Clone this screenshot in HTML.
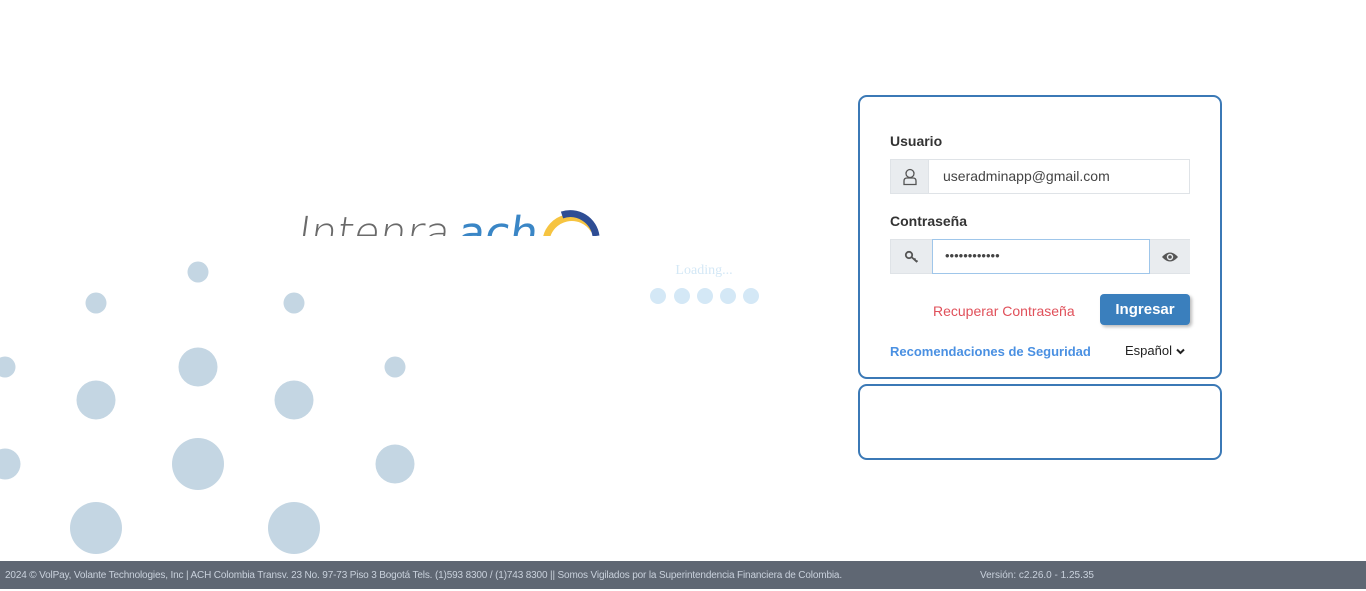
<!DOCTYPE html>
<html><head><meta charset="utf-8"><style>
*{box-sizing:border-box;margin:0;padding:0}
body{width:1366px;height:589px;overflow:hidden;background:#fff;font-family:"Liberation Sans",Arial,sans-serif;position:relative}
.card{position:absolute;left:858px;width:364px;border:2px solid #3b79b6;border-radius:9px;background:#fff}
.lbl{position:absolute;left:30px;font-size:14px;font-weight:bold;color:#333}
.grp{position:absolute;left:30px;width:300px;height:35px;border:1px solid #dfe3e7}
.add{position:absolute;top:0;height:33px;background:#e9ecef;display:flex;align-items:center;justify-content:center}
.foot{position:absolute;left:0;top:561px;width:1366px;height:28px;background:#5f6773;color:#c9d1dc;font-size:10px;line-height:30px}
</style></head><body>
<svg width="1366" height="589" style="position:absolute;left:0;top:0">
<g fill="#c4d6e3">
<circle cx="198" cy="272" r="10.5"/><circle cx="96" cy="303" r="10.5"/><circle cx="294" cy="303" r="10.5"/>
<circle cx="5" cy="367" r="10.5"/><circle cx="395" cy="367" r="10.5"/><circle cx="198" cy="367" r="19.5"/>
<circle cx="96" cy="400" r="19.5"/><circle cx="294" cy="400" r="19.5"/>
<circle cx="5" cy="464" r="15.5"/><circle cx="198" cy="464" r="26"/><circle cx="395" cy="464" r="19.5"/>
<circle cx="96" cy="528" r="26"/><circle cx="294" cy="528" r="26"/><circle cx="198" cy="580" r="19"/>
</g>
<g fill="#d4e8f6"><circle cx="658" cy="296" r="8"/><circle cx="682" cy="296" r="8"/><circle cx="705" cy="296" r="8"/><circle cx="728" cy="296" r="8"/><circle cx="751" cy="296" r="8"/></g>
<text x="704" y="274" text-anchor="middle" font-family="Liberation Serif,serif" font-size="14" fill="#d4e8f6">Loading...</text>
<defs><clipPath id="c"><rect x="280" y="195" width="330" height="41"/></clipPath></defs>
<g clip-path="url(#c)">
<g transform="skewX(-8) translate(33,0)">
<text x="298" y="248" font-family="DejaVu Sans,sans-serif" font-weight="200" font-size="44" fill="#6a6a6a" textLength="152" lengthAdjust="spacingAndGlyphs">Intenra</text>
<text x="458" y="248" font-family="DejaVu Sans,sans-serif" font-size="44" fill="#3a86c6" textLength="80" lengthAdjust="spacingAndGlyphs">ach</text>
</g>
<path d="M546 240 A26 26 0 0 1 594 230" fill="none" stroke="#f6c441" stroke-width="7"/>
<path d="M562 215 A26 26 0 0 1 596 236" fill="none" stroke="#2e4d94" stroke-width="7"/>
</g>
</svg>
<div class="card" style="top:95px;height:284px">
<div class="lbl" style="top:36px">Usuario</div>
<div class="grp" style="top:62px"><div class="add" style="left:0;width:38px;border-right:1px solid #dfe3e7">
<svg width="16" height="18" viewBox="0 0 16 18"><circle cx="8" cy="5.5" r="4" fill="none" stroke="#555" stroke-width="1.3"/><path d="M2 16.5 V13 Q2 10 5 10 H11 Q14 10 14 13 V16.5 Z" fill="none" stroke="#555" stroke-width="1.3"/></svg></div>
<div style="position:absolute;left:52px;top:8px;font-size:14px;color:#444">useradminapp@gmail.com</div></div>
<div class="lbl" style="top:116px">Contraseña</div>
<div class="grp" style="top:142px"><div class="add" style="left:0;width:41px">
<svg width="16" height="16" viewBox="0 0 16 16"><circle cx="5" cy="6" r="3.2" fill="none" stroke="#555" stroke-width="1.8"/><path d="M7.5 8 L13 13 M10 11 L11.5 9.5 M12 13 L13.5 11.5" stroke="#555" stroke-width="1.8"/></svg></div>
<div style="position:absolute;left:41px;top:-1px;width:218px;height:35px;border:1px solid #9fc6ea;background:#fff"><div style="position:absolute;left:12px;top:8px;font-size:13px;color:#444">••••••••••••</div></div>
<div class="add" style="left:259px;width:40px">
<svg width="18" height="12" viewBox="0 0 18 12"><path d="M1 6 Q9 -3 17 6 Q9 15 1 6Z" fill="#555"/><circle cx="9" cy="6" r="3.2" fill="#e9ecef"/><circle cx="9" cy="6" r="1.8" fill="#555"/></svg></div></div>
<div style="position:absolute;left:73px;top:206px;font-size:14px;color:#e0505a">Recuperar Contraseña</div>
<div style="position:absolute;left:240px;top:197px;width:90px;height:31px;background:#3a7fbd;border-radius:4px;color:#fff;font-weight:bold;font-size:15px;text-align:center;line-height:31px;box-shadow:2px 2px 3px #bbb">Ingresar</div>
<div style="position:absolute;left:30px;top:247px;font-size:13px;font-weight:bold;color:#4a90e2">Recomendaciones de Seguridad</div>
<div style="position:absolute;left:265px;top:246px;font-size:13px;color:#222">Español <svg width="9" height="7" viewBox="0 0 9 7"><path d="M1 1.5 L4.5 5 L8 1.5" fill="none" stroke="#222" stroke-width="2"/></svg></div>
</div>
<div class="card" style="top:384px;height:76px"></div>
<div class="foot"><span style="position:absolute;left:5px;letter-spacing:-0.15px">2024 © VolPay, Volante Technologies, Inc | ACH Colombia Transv. 23 No. 97-73 Piso 3 Bogotá Tels. (1)593 8300 / (1)743 8300 || Somos Vigilados por la Superintendencia Financiera de Colombia.</span><span style="position:absolute;left:980px">Versión: c2.26.0 - 1.25.35</span></div>
</body></html>
